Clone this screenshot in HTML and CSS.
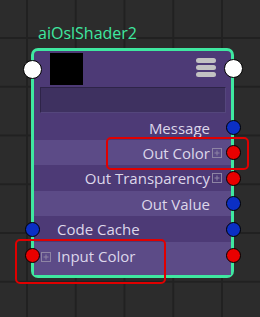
FILE: index.html
```html
<!DOCTYPE html>
<html>
<head>
<meta charset="utf-8">
<link rel="stylesheet" href="styles.css">
</head>
<body>
<div class="canvas">
  <div class="title">aiOslShader2</div>
  <div class="node">
    <span class="port port-white port-hl"></span>
    <span class="port port-white port-hr"></span>
    <div class="node-head">
      <div class="swatch"></div>
      <div class="menu"><i></i><i></i><i></i></div>
    </div>
    <div class="field"></div>
    <div class="rows">
      <div class="row out h25">
        <span class="label">Message</span><span class="slot"></span>
        <span class="port port-blue port-r"></span>
      </div>
      <div class="row out alt h25">
        <span class="label">Out Color</span>
        <span class="slot"><svg viewBox="0 0 10 10" width="10" height="10"><rect x="0.5" y="0.5" width="9" height="9" fill="none" stroke="#8e84a4"/><path d="M5 2.5v5M2.5 5h5" stroke="#8e84a4" stroke-width="1"/></svg></span>
        <span class="port port-red port-r"></span>
      </div>
      <div class="row out h26">
        <span class="label">Out Transparency</span>
        <span class="slot"><svg viewBox="0 0 10 10" width="10" height="10"><rect x="0.5" y="0.5" width="9" height="9" fill="none" stroke="#8e84a4"/><path d="M5 2.5v5M2.5 5h5" stroke="#8e84a4" stroke-width="1"/></svg></span>
        <span class="port port-red port-r"></span>
      </div>
      <div class="row out alt h25">
        <span class="label">Out Value</span><span class="slot"></span>
        <span class="port port-blue port-r"></span>
      </div>
      <div class="row in h26">
        <span class="slot"></span><span class="label">Code Cache</span>
        <span class="port port-blue port-l"></span>
        <span class="port port-blue port-r"></span>
      </div>
      <div class="row in alt last">
        <span class="slot"><svg viewBox="0 0 10 10" width="10" height="10"><rect x="0.5" y="0.5" width="9" height="9" fill="none" stroke="#8e84a4"/><path d="M5 2.5v5M2.5 5h5" stroke="#8e84a4" stroke-width="1"/></svg></span><span class="label">Input Color</span>
        <span class="port port-red port-l"></span>
        <span class="port port-red port-r"></span>
      </div>
    </div>
  </div>
  <div class="mark mark-1"></div>
  <div class="mark mark-2"></div>
</div>
</body>
</html>
```

FILE: styles.css
```css
html, body {
  margin: 0;
  padding: 0;
}
body {
  width: 260px;
  height: 317px;
  overflow: hidden;
  background-color: #2c2c2c;
  background-image:
    linear-gradient(to right, #212121 2px, transparent 2px),
    linear-gradient(to bottom, #212121 2px, transparent 2px);
  background-size: 48.75px 48.75px;
  background-position: 26px 37px;
  font-family: "Open Sans", "Noto Sans", sans-serif;
}
.canvas {
  position: relative;
  width: 260px;
  height: 317px;
  padding: 22px 0 0 31px;
  box-sizing: border-box;
}
.title {
  margin-left: 7px;
  height: 26px;
  line-height: 22px;
  font-size: 16px;
  color: #3fe8a0;
}
.node {
  position: relative;
  width: 197px;
  height: 224px;
  border: 3px solid #3fe8a0;
  border-radius: 7px;
  background: #4d3a76;
  display: flex;
  flex-direction: column;
}
.node-head {
  height: 36px;
  display: flex;
  justify-content: space-between;
  align-items: flex-start;
}
.swatch {
  width: 33px;
  height: 32px;
  margin: 2px 0 0 16px;
  background: #000;
}
.menu {
  margin: 7px 15px 0 0;
  width: 20px;
  display: flex;
  flex-direction: column;
  gap: 2px;
}
.menu i {
  display: block;
  height: 5px;
  border-radius: 2.5px;
  background: #c2c2c2;
}
.field {
  margin: 0 5px 0 6px;
  height: 26px;
  box-sizing: border-box;
  background: #3e3160;
  border-top: 1px solid #2e2448;
  border-left: 1px solid #2e2448;
  border-right: 1px solid #54467c;
  border-bottom: 1px solid #54467c;
}
.rows {
  margin-top: 2px;
  flex: 1;
  display: flex;
  flex-direction: column;
}
.row {
  position: relative;
  display: flex;
  align-items: center;
  font-size: 15px;
  color: #ddd7ea;
  white-space: nowrap;
}
.h25 { height: 25px; }
.h26 { height: 26px; }
.row.alt { background: #5c4b87; }
.row.out {
  justify-content: flex-end;
  padding-right: 9px;
}
.row.out .slot { margin-left: 2px; }
.row.in {
  padding-left: 7px;
}
.row.in .slot { margin-right: 6px; }
.row.last {
  flex: 1;
  align-items: flex-start;
  padding-top: 1px;
  line-height: 26px;
}
.row.last .slot { margin-top: 9px; }
.slot {
  width: 10px;
  height: 10px;
  display: flex;
}
.port {
  position: absolute;
  box-sizing: border-box;
  border-radius: 50%;
  border: 1.5px solid #000;
}
.port-r, .port-l {
  width: 15px;
  height: 15px;
  top: 50%;
  margin-top: -7.5px;
}
.port-r { right: -10px; }
.port-l { left: -9px; }
.row.last .port { top: 13px; margin-top: -7.5px; }
.port-blue { background: #0b2fc4; }
.port-red { background: #e80000; }
.port-white {
  width: 19px;
  height: 19px;
  background: #fff;
}
.port-hl { left: -11.5px; top: 8.5px; }
.port-hr { right: -11.5px; top: 7.5px; }
.mark {
  position: absolute;
  box-sizing: border-box;
  border: 2px solid #e00000;
  border-radius: 5px;
}
.mark-1 { left: 106px; top: 137px; width: 143px; height: 33px; }
.mark-2 { left: 15px; top: 239px; width: 151px; height: 45px; }
```
